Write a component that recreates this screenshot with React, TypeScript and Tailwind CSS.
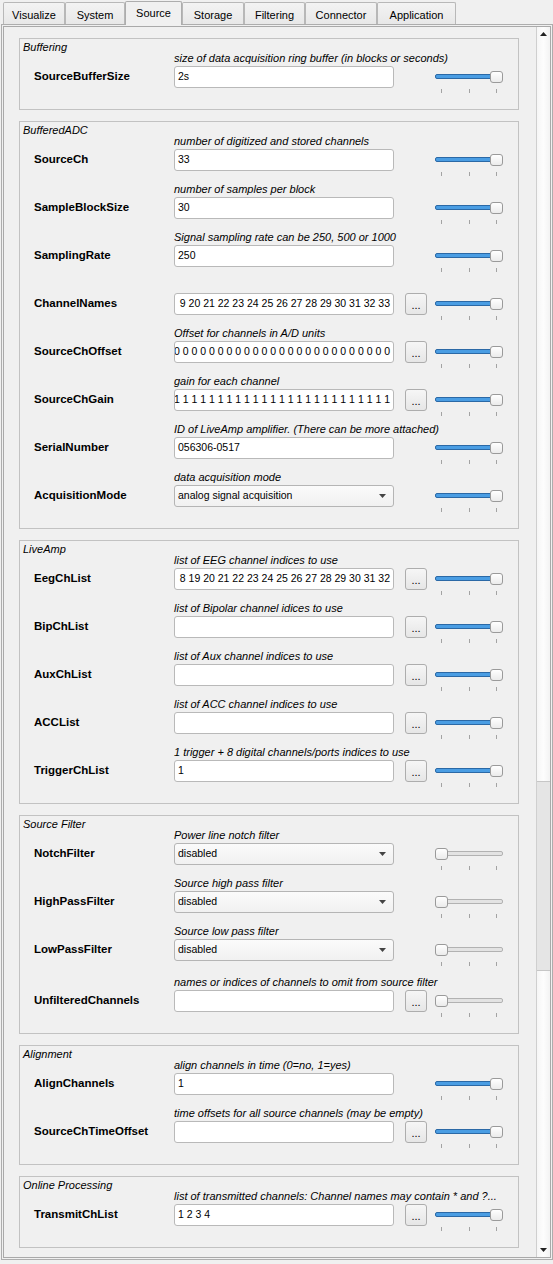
import React from "react";

type Kind = "edit" | "combo";

interface Param {
  label: string;
  desc: string;
  kind: Kind;
  value: string;
  scrolled?: boolean;
  button?: boolean;
  atMin?: boolean;
  extraTop?: boolean;
}

interface Section {
  title: string;
  params: Param[];
}

// Long list values are shown scrolled to their end, so only the tail is kept.
const range = (from: number, to: number) =>
  Array.from({ length: to - from + 1 }, (_, i) => String(from + i)).join(" ");
const rep = (c: string, n: number) => Array.from({ length: n }, () => c).join(" ");

const sections: Section[] = [
  {
    title: "Buffering",
    params: [
      {
        label: "SourceBufferSize",
        desc: "size of data acquisition ring buffer (in blocks or seconds)",
        kind: "edit",
        value: "2s",
      },
    ],
  },
  {
    title: "BufferedADC",
    params: [
      { label: "SourceCh", desc: "number of digitized and stored channels", kind: "edit", value: "33" },
      { label: "SampleBlockSize", desc: "number of samples per block", kind: "edit", value: "30" },
      { label: "SamplingRate", desc: "Signal sampling rate can be 250, 500 or 1000", kind: "edit", value: "250" },
      { label: "ChannelNames", desc: "", kind: "edit", value: "9 " + range(20, 33), scrolled: true, button: true },
      { label: "SourceChOffset", desc: "Offset for channels in A/D units", kind: "edit", value: rep("0", 25), scrolled: true, button: true },
      { label: "SourceChGain", desc: "gain for each channel", kind: "edit", value: rep("1", 25), scrolled: true, button: true },
      { label: "SerialNumber", desc: "ID of LiveAmp amplifier. (There can be more attached)", kind: "edit", value: "056306-0517" },
      { label: "AcquisitionMode", desc: "data acquisition mode", kind: "combo", value: "analog signal acquisition" },
    ],
  },
  {
    title: "LiveAmp",
    params: [
      { label: "EegChList", desc: "list of EEG channel indices to use", kind: "edit", value: "8 " + range(19, 32), scrolled: true, button: true },
      { label: "BipChList", desc: "list of Bipolar channel idices to use", kind: "edit", value: "", button: true },
      { label: "AuxChList", desc: "list of Aux channel indices to use", kind: "edit", value: "", button: true },
      { label: "ACCList", desc: "list of ACC channel indices to use", kind: "edit", value: "", button: true },
      { label: "TriggerChList", desc: "1 trigger + 8 digital channels/ports indices to use", kind: "edit", value: "1", button: true },
    ],
  },
  {
    title: "Source Filter",
    params: [
      { label: "NotchFilter", desc: "Power line notch filter", kind: "combo", value: "disabled", atMin: true },
      { label: "HighPassFilter", desc: "Source high pass filter", kind: "combo", value: "disabled", atMin: true },
      { label: "LowPassFilter", desc: "Source low pass filter", kind: "combo", value: "disabled", atMin: true },
      {
        label: "UnfilteredChannels",
        desc: "names or indices of channels to omit from source filter",
        kind: "edit",
        value: "",
        button: true,
        atMin: true,
        extraTop: true,
      },
    ],
  },
  {
    title: "Alignment",
    params: [
      { label: "AlignChannels", desc: "align channels in time (0=no, 1=yes)", kind: "edit", value: "1" },
      { label: "SourceChTimeOffset", desc: "time offsets for all source channels (may be empty)", kind: "edit", value: "", button: true },
    ],
  },
  {
    title: "Online Processing",
    params: [
      {
        label: "TransmitChList",
        desc: "list of transmitted channels: Channel names may contain * and ?...",
        kind: "edit",
        value: "1 2 3 4",
        button: true,
      },
    ],
  },
];

const tabs = [
  { name: "Visualize", w: "w-[62px]" },
  { name: "System", w: "w-[60px]" },
  { name: "Source", w: "w-[57px]", active: true },
  { name: "Storage", w: "w-[62px]" },
  { name: "Filtering", w: "w-[61px]" },
  { name: "Connector", w: "w-[72px]" },
  { name: "Application", w: "w-[79px]" },
];

function Slider({ atMin }: { atMin?: boolean }) {
  return (
    <div className="relative h-[22px] w-[68px] shrink-0">
      {atMin ? (
        <div className="absolute right-0 top-[8px] h-[5px] w-[58px] rounded-[2px] border border-[#b2b2b2] bg-[#e3e3e3]" />
      ) : (
        <div className="absolute left-0 top-[8px] h-[5px] w-[58px] rounded-[2px] border border-[#2b69a6] bg-[#4a9de3]" />
      )}
      <div
        className={`absolute top-[5px] h-[12px] w-[13px] rounded-[3px] border border-[#9a9a9a] bg-gradient-to-b from-white to-[#ebebeb] ${
          atMin ? "left-0" : "right-0"
        }`}
      />
      <div className="absolute left-[6px] top-[23px] h-[4px] w-px bg-[#a3a3a3]" />
      <div className="absolute left-[34px] top-[23px] h-[4px] w-px bg-[#a3a3a3]" />
      <div className="absolute left-[61px] top-[23px] h-[4px] w-px bg-[#a3a3a3]" />
    </div>
  );
}

function Field({ p }: { p: Param }) {
  if (p.kind === "combo") {
    return (
      <div className="flex h-[22px] w-[220px] shrink-0 items-center justify-between rounded-[3px] border border-[#b5b5b5] bg-gradient-to-b from-[#fbfbfb] to-[#f1f1f1] pl-[3px] pr-[7px] text-[10.5px]">
        <span className="whitespace-nowrap">{p.value}</span>
        <svg width="7" height="4" viewBox="0 0 7 4">
          <polygon points="0,0 7,0 3.5,4" fill="#444" />
        </svg>
      </div>
    );
  }
  return (
    <div
      className={`flex h-[22px] w-[220px] shrink-0 items-center overflow-hidden whitespace-nowrap rounded-[3px] border border-[#b9b9b9] bg-white px-[3px] text-[10.5px] ${
        p.scrolled ? "justify-end" : "justify-start"
      }`}
    >
      <span>{p.value}</span>
    </div>
  );
}

function Row({ p }: { p: Param }) {
  return (
    <div className={`flex flex-col ${p.extraTop ? "h-[51px] pt-[3px]" : "h-[48px]"}`}>
      <div className="h-[13px] whitespace-nowrap pl-[154px] text-[11px] italic leading-[11px]">{p.desc}</div>
      <div className="flex h-[22px] items-center pl-[14px]">
        <div className="w-[140px] shrink-0 text-[11.5px] font-bold">{p.label}</div>
        <Field p={p} />
        <div className="ml-[11px] h-[22px] w-[22px] shrink-0">
          {p.button && (
            <div className="flex h-[22px] w-[22px] items-end justify-center rounded-[3px] border border-[#adadad] bg-gradient-to-b from-[#f6f6f6] to-[#e6e6e6] pb-[3px] text-[11px] leading-none">
              ...
            </div>
          )}
        </div>
        <div className="ml-[8px]">
          <Slider atMin={p.atMin} />
        </div>
      </div>
    </div>
  );
}

function Group({ s }: { s: Section }) {
  return (
    <div className="w-[500px] border border-[#c2c2c2] pb-[8px] pt-px">
      <div className="h-[13px] pl-[3px] text-[11px] italic leading-[14px]">{s.title}</div>
      {s.params.map((p) => (
        <Row key={p.label} p={p} />
      ))}
    </div>
  );
}

function ScrollBar() {
  return (
    <div className="flex w-[14px] shrink-0 flex-col border-l border-[#cfcfcf] bg-gradient-to-r from-[#f6f6f6] via-[#fdfdfd] to-[#f3f3f3]">
      <div className="flex h-[13px] items-center justify-center pt-px">
        <svg width="7" height="4" viewBox="0 0 7 4">
          <polygon points="3.5,0 7,4 0,4" fill="#222" />
        </svg>
      </div>
      <div className="relative flex-1">
        <div className="absolute left-0 right-0 top-[741px] h-[190px] border-y border-[#c6c6c6] bg-[#e5e5e5]" />
      </div>
      <div className="flex h-[14px] items-center justify-center">
        <svg width="7" height="4" viewBox="0 0 7 4">
          <polygon points="0,0 7,0 3.5,4" fill="#222" />
        </svg>
      </div>
    </div>
  );
}

export default function App() {
  return (
    <div className="h-[1264px] w-[553px] overflow-hidden bg-[#f0f0f0] font-['Liberation_Sans',Arial,sans-serif] text-black">
      <div className="relative z-10 flex h-[24px] items-end pl-[3px]">
        {tabs.map((t) =>
          t.active ? (
            <div
              key={t.name}
              className={`${t.w} -mb-px flex h-[24px] items-center justify-center rounded-t-[2px] border-x border-t border-[#adadad] bg-[#f0f0f0] text-[11px]`}
            >
              {t.name}
            </div>
          ) : (
            <div
              key={t.name}
              className={`${t.w} flex h-[22px] items-center justify-center rounded-t-[2px] border-x border-t border-[#b8b8b8] bg-gradient-to-b from-[#f3f3f3] to-[#e8e8e8] pt-[3px] text-[11px]`}
            >
              {t.name}
            </div>
          )
        )}
      </div>
      <div className="ml-px h-[1236px] w-[552px] border border-[#adadad] p-px">
        <div className="flex h-full border border-[#a9a9a9]">
          <div className="flex flex-1 flex-col gap-[11px] overflow-hidden pl-[15px] pt-[11px]">
            {sections.map((s) => (
              <Group key={s.title} s={s} />
            ))}
          </div>
          <ScrollBar />
        </div>
      </div>
    </div>
  );
}
